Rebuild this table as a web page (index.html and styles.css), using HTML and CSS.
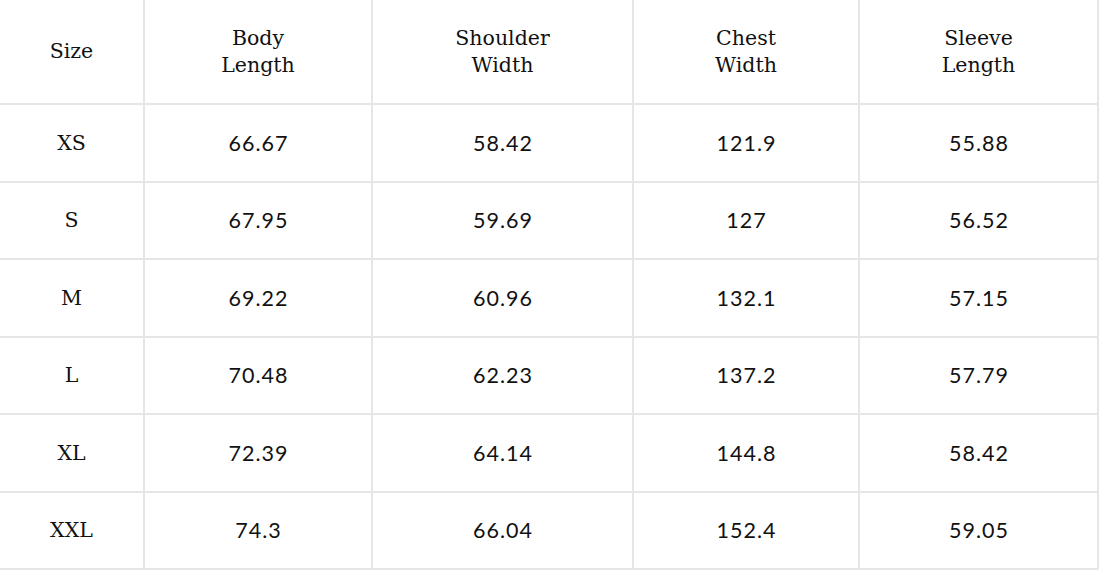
FILE: index.html
```html
<!DOCTYPE html>
<html>
<head>
<meta charset="utf-8">
<link rel="stylesheet" href="styles.css">
</head>
<body>
<div class="chart">
  <div class="cell head">Size</div>
  <div class="cell head">Body<br>Length</div>
  <div class="cell head">Shoulder<br>Width</div>
  <div class="cell head">Chest<br>Width</div>
  <div class="cell head">Sleeve<br>Length</div>

  <div class="cell size">XS</div><div class="cell num">66.67</div><div class="cell num">58.42</div><div class="cell num">121.9</div><div class="cell num">55.88</div>
  <div class="cell size">S</div><div class="cell num">67.95</div><div class="cell num">59.69</div><div class="cell num">127</div><div class="cell num">56.52</div>
  <div class="cell size">M</div><div class="cell num">69.22</div><div class="cell num">60.96</div><div class="cell num">132.1</div><div class="cell num">57.15</div>
  <div class="cell size">L</div><div class="cell num">70.48</div><div class="cell num">62.23</div><div class="cell num">137.2</div><div class="cell num">57.79</div>
  <div class="cell size">XL</div><div class="cell num">72.39</div><div class="cell num">64.14</div><div class="cell num">144.8</div><div class="cell num">58.42</div>
  <div class="cell size">XXL</div><div class="cell num">74.3</div><div class="cell num">66.04</div><div class="cell num">152.4</div><div class="cell num">59.05</div>
</div>
</body>
</html>
```
FILE: styles.css
```css
html, body {
  margin: 0;
  padding: 0;
  background: #ffffff;
}
.chart {
  display: grid;
  grid-template-columns: 145px 228px 261px 226px 239px;
  grid-template-rows: 105px repeat(6, 77.5px);
  width: 1099px;
  color: #111111;
}
.cell {
  display: flex;
  align-items: center;
  justify-content: center;
  text-align: center;
  border-right: 2px solid #e6e6e6;
  border-bottom: 2px solid #e6e6e6;
  box-sizing: border-box;
}
.head {
  font-family: "DejaVu Serif", "Liberation Serif", serif;
  font-size: 20.5px;
  line-height: 27px;
}
.size {
  font-family: "DejaVu Serif", "Liberation Serif", serif;
  font-size: 20.5px;
}
.num {
  font-family: "Lato", "Open Sans", sans-serif;
  font-size: 21.5px;
  letter-spacing: 1px;
  padding-left: 1px;
}
```
